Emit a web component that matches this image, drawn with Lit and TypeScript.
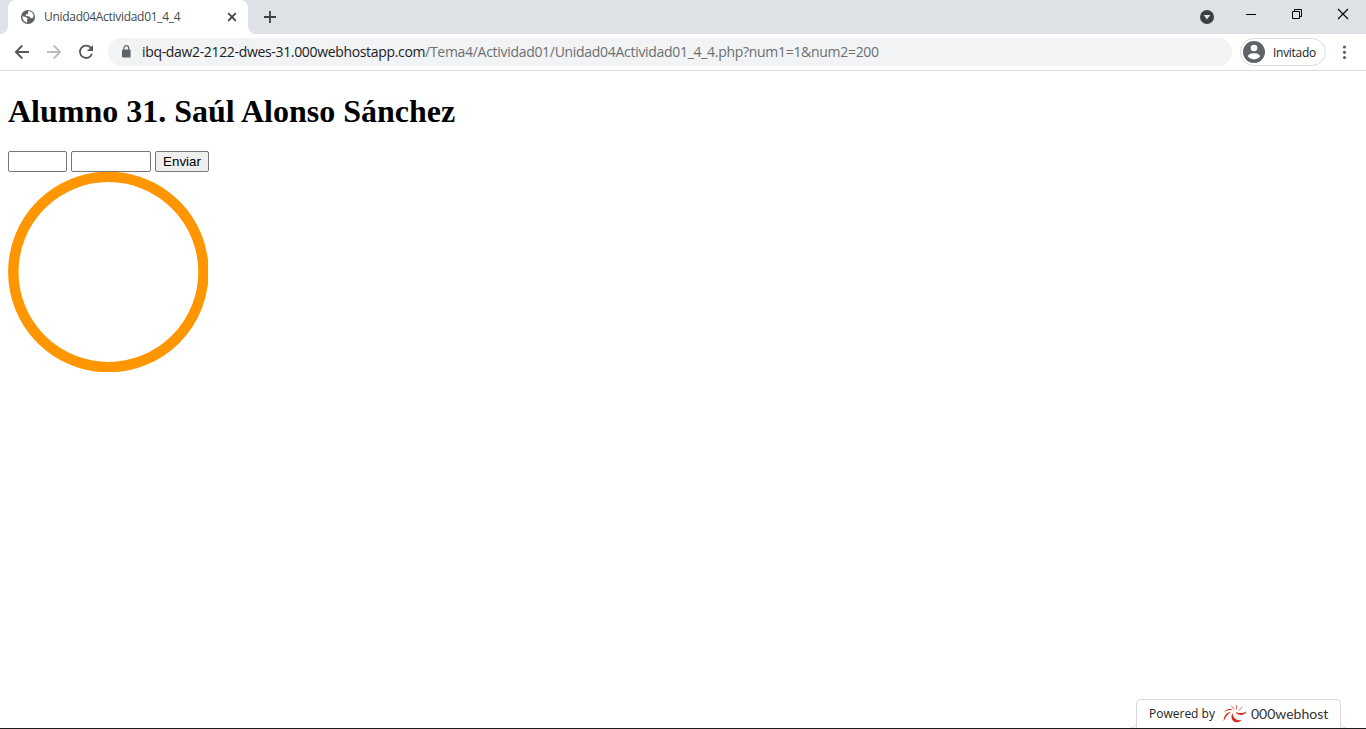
import { LitElement, html, css } from "lit";
import { customElement } from "lit/decorators.js";

@customElement("browser-tabs")
class BrowserTabs extends LitElement {
  static styles = css`
    :host { display: flex; height: 34px; background: #dee1e6; font-family: "Open Sans", sans-serif; }
    svg { display: block; flex: none; }
    .edge { width: 8px; background: #fff; }
    .edge i { display: block; height: 34px; background: #dee1e6; border-bottom-right-radius: 8px; }
    .edge.right i { border-radius: 0 0 0 8px; }
    .tab { box-sizing: border-box; width: 240px; height: 34px; padding: 0 10px 0 12px; display: flex; align-items: center; background: #fff; border-radius: 8px 8px 0 0; }
    .title { flex: 1; margin-left: 8px; font-size: 12px; line-height: 34px; letter-spacing: -0.3px; color: #45494d; white-space: nowrap; }
    .plus { margin: 10px 0 0 7px; }
    .controls { margin-left: auto; display: flex; }
  `;
  render() {
    return html`
      <div class="edge"><i></i></div>
      <div class="tab">
        <svg width="16" height="16" viewBox="0 0 16 16"><circle cx="8" cy="8" r="7.1" fill="#5f6368"/><path d="M2.4 7.2 L5.8 8 7.8 9.5 6.9 10.7 7.4 13.6 A5.8 5.8 0 0 1 2.4 7.2Z M8.2 2.1 C10.8 2.2 12.9 3.9 13.6 6.2 L13.3 8.4 10.9 9.2 9.5 7.5 6 6.9 5.7 5.6 8.1 4.9Z" fill="#fff"/></svg>
        <span class="title">Unidad04Actividad01_4_4</span>
        <svg width="12" height="12" viewBox="0 0 12 12"><path d="M2.2 2.2l7.6 7.6M9.8 2.2l-7.6 7.6" stroke="#3c4043" stroke-width="1.7"/></svg>
      </div>
      <div class="edge right"><i></i></div>
      <svg class="plus" width="14" height="14" viewBox="0 0 14 14"><path d="M1 7h12M7 1v12" stroke="#3c4043" stroke-width="1.8"/></svg>
      <div class="controls">
        <svg width="167" height="34" viewBox="1199 0 167 34">
          <circle cx="1207" cy="17" r="7" fill="#3c4043"/><path d="M1203.7 15h6.6l-3.3 4.5z" fill="#dee1e6"/>
          <path d="M1246 14.5h10" stroke="#000"/>
          <path d="M1292.5 11.5h7v7h-7zM1294.5 11.5v-2h7v7h-2" fill="none" stroke="#000"/>
          <path d="M1338 9l10 10M1348 9l-10 10" stroke="#000" stroke-width="1.1"/>
        </svg>
      </div>`;
  }
}

@customElement("browser-toolbar")
class BrowserToolbar extends LitElement {
  static styles = css`
    :host { box-sizing: border-box; display: flex; height: 37px; padding: 4px 0; background: #fff; border-bottom: 1px solid #dadce0; font-family: "Open Sans", sans-serif; }
    svg { display: block; flex: none; }
    .nav { width: 108px; height: 28px; }
    .address { box-sizing: border-box; display: flex; align-items: center; width: 1124px; height: 28px; padding-left: 12px; border-radius: 14px; background: #f1f3f4; font-size: 14px; white-space: nowrap; }
    .url { margin-left: 10px; padding-bottom: 1px; }
    .host { color: #202124; letter-spacing: -0.335px; }
    .path { color: #6b6f73; letter-spacing: -0.3px; }
    .profile { box-sizing: border-box; display: flex; align-items: center; width: 86px; height: 28px; margin-left: 8px; padding-left: 2px; border: 1px solid #dadce0; border-radius: 14px; font-size: 12px; color: #202124; }
    .name { margin-left: 8px; letter-spacing: -0.28px; }
    .menu { margin-left: 10px; }
  `;
  render() {
    return html`
      <svg class="nav" viewBox="0 38 108 28" fill="none" stroke-width="1.8">
        <path d="M29 52H16M22.3 45.5L15.8 52l6.5 6.5" stroke="#54585d"/>
        <path d="M47 52h13M53.7 45.5l6.5 6.5-6.5 6.5" stroke="#babcbe"/>
        <path d="M91.2 48.2A6.2 6.2 0 1 0 92 53.8" stroke="#54585d"/><path d="M93 45v6h-6z" fill="#54585d"/>
      </svg>
      <div class="address">
        <svg width="12" height="16" viewBox="0 0 12 16"><rect x="2" y="5.4" width="8.6" height="8" rx="1" fill="#5f6368"/><path d="M3.9 6V4a2.4 2.4 0 0 1 4.8 0v2" fill="none" stroke="#5f6368" stroke-width="1.2"/></svg>
        <div class="url"><span class="host">ibq-daw2-2122-dwes-31.000webhostapp.com</span><span class="path">/Tema4/Actividad01/Unidad04Actividad01_4_4.php?num1=1&amp;num2=200</span></div>
      </div>
      <div class="profile">
        <svg width="22" height="22" viewBox="0 0 22 22"><circle cx="11" cy="11" r="11" fill="#5f6368"/><circle cx="11" cy="7" r="3.3" fill="#fff"/><path d="M4.8 15.3C5.7 12.9 9 12.3 11 12.3s5.3.6 6.2 3a7.7 7.7 0 0 1-12.4 0z" fill="#fff"/></svg>
        <span class="name">Invitado</span>
      </div>
      <svg class="menu" width="16" height="28" viewBox="0 0 16 28" fill="#5f6368"><circle cx="8.5" cy="9" r="1.6"/><circle cx="8.5" cy="14.3" r="1.6"/><circle cx="8.5" cy="19.5" r="1.6"/></svg>`;
  }
}

@customElement("hosting-badge")
class HostingBadge extends LitElement {
  static styles = css`
    :host { display: flex; align-items: flex-end; font-family: "Open Sans", sans-serif; font-size: 12px; color: #222; white-space: nowrap; }
    .panel { display: flex; align-items: center; box-sizing: border-box; width: 205px; height: 29px; padding: 0 0 1px 12px; border: 1px solid #d9d9d9; border-bottom: 0; border-radius: 5px 5px 0 0; background: #fff; }
    .logo { display: block; margin: 0 4px 0 8px; flex: none; }
    .flare { display: block; flex: none; }
    .brand { font-family: Lato, sans-serif; font-size: 14px; color: #333; }
  `;
  render() {
    return html`
      <svg class="flare" width="5" height="4" viewBox="0 0 5 4"><path d="M0 3.5Q5 3.5 5 0" fill="none" stroke="#d9d9d9"/></svg>
      <div class="panel"><span>Powered by</span>
      <svg class="logo" width="24" height="22" viewBox="0 0 24 22" fill="#dc291e">
        <path d="M.6 18.3C.8 13 2.8 9.6 8 9 4.4 11 2.8 13.6.6 18.3Z"/>
        <path d="M1 9.3C3.5 5.8 7.4 5.2 10.2 7.4 7 6.7 4 7.2 1 9.3Z"/>
        <path d="M6.6 2.8c3 .2 4.8 2 5 4.6C10.4 5 9.1 3.8 6.6 2.8Z"/>
        <path d="M12.8 1.2c1.7 1.8 1.8 4 .4 5.9.3-2.3.2-3.9-.4-5.9Z"/>
        <path d="M19.6 3c-.5 2.5-2.2 4-5.2 4.7 2.4-1.4 3.7-2.5 5.2-4.7Z"/>
        <path d="M23.4 8.2c-1.5 4.8-8.4 5.3-11.2.3 3.8 2.3 7.8 2.1 11.2-.3Z"/>
        <path d="M9.5 9.8c.4 5.4 3.9 8 9.2 7.5-5.6 4.9-12.8.3-9.2-7.5Z"/>
      </svg>
      <span class="brand">000webhost</span></div>
      <svg class="flare" width="5" height="4" viewBox="0 0 5 4"><path d="M0 0Q0 3.5 5 3.5" fill="none" stroke="#d9d9d9"/></svg>`;
  }
}

@customElement("app-root")
class AppRoot extends LitElement {
  static styles = css`
    :host { display: flex; flex-direction: column; box-sizing: border-box; width: 1366px; height: 729px; overflow: hidden; background: #fff; border-bottom: 1px solid #1c1c1c; }
    main { flex: 1; padding: 0 8px; font-family: "Liberation Serif", serif; }
    h1 { margin: 22px 0 21px; font-size: 32px; line-height: 37px; color: #000; white-space: nowrap; }
    form { display: flex; gap: 4px; height: 21px; }
    input { box-sizing: border-box; height: 21px; padding: 1px 2px; border: 1px solid #767676; border-radius: 2px; background: #fff; }
    .small { width: 59px; }
    .wide { width: 80px; }
    button { box-sizing: border-box; width: 54px; height: 21px; padding: 0; border: 1px solid #767676; border-radius: 2px; background: #efefef; font: 13.333px "Liberation Sans", sans-serif; color: #000; }
    .circle { display: block; }
    footer { display: flex; justify-content: flex-end; padding-right: 20px; }
  `;
  render() {
    return html`
      <browser-tabs></browser-tabs>
      <browser-toolbar></browser-toolbar>
      <main>
        <h1>Alumno 31. Saúl Alonso Sánchez</h1>
        <form><input class="small" type="text"><input class="wide" type="text"><button type="button">Enviar</button></form>
        <svg class="circle" width="200" height="200"><circle cx="100.4" cy="100" r="95.1" fill="none" stroke="#ff9600" stroke-width="10.4"/></svg>
      </main>
      <footer><hosting-badge></hosting-badge></footer>`;
  }
}
